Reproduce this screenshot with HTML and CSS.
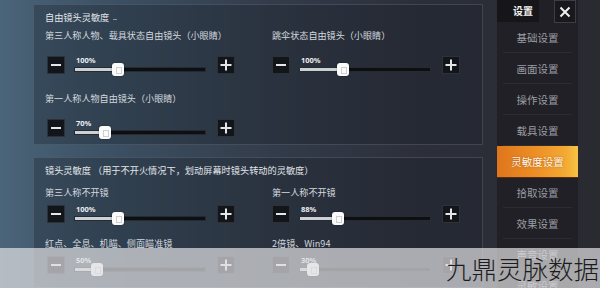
FILE: index.html
```html
<!DOCTYPE html>
<html lang="zh">
<head>
<meta charset="utf-8">
<title>灵敏度设置</title>
<link rel="stylesheet" href="styles.css">
</head>
<body>
<div class="screen">
  <div class="content">
    <section class="panel panel-free">
      <div class="panel-title">自由镜头灵敏度<span class="dash"></span></div>
      <div class="grid">
        <div class="setting">
          <div class="label">第三人称人物、载具状态自由镜头（小眼睛）</div>
          <div class="slider-row">
            <div class="btn"><svg width="12" height="12" viewBox="0 0 12 12"><path d="M1 6h10" stroke="#e4e6e8" stroke-width="2"/></svg></div>
            <div class="slider">
              <span class="pct">100%</span>
              <div class="track"><div class="fill" style="width:33.3%"></div><div class="thumb" style="left:33.3%"></div></div>
            </div>
            <div class="btn"><svg width="12" height="12" viewBox="0 0 12 12"><path d="M6 0.5v11M0.5 6h11" stroke="#e4e6e8" stroke-width="2"/></svg></div>
          </div>
        </div>
        <div class="setting">
          <div class="label">跳伞状态自由镜头（小眼睛）</div>
          <div class="slider-row">
            <div class="btn"><svg width="12" height="12" viewBox="0 0 12 12"><path d="M1 6h10" stroke="#e4e6e8" stroke-width="2"/></svg></div>
            <div class="slider">
              <span class="pct">100%</span>
              <div class="track"><div class="fill" style="width:33.3%"></div><div class="thumb" style="left:33.3%"></div></div>
            </div>
            <div class="btn"><svg width="12" height="12" viewBox="0 0 12 12"><path d="M6 0.5v11M0.5 6h11" stroke="#e4e6e8" stroke-width="2"/></svg></div>
          </div>
        </div>
        <div class="setting">
          <div class="label">第一人称人物自由镜头（小眼睛）</div>
          <div class="slider-row">
            <div class="btn"><svg width="12" height="12" viewBox="0 0 12 12"><path d="M1 6h10" stroke="#e4e6e8" stroke-width="2"/></svg></div>
            <div class="slider">
              <span class="pct">70%</span>
              <div class="track"><div class="fill" style="width:23.3%"></div><div class="thumb" style="left:23.3%"></div></div>
            </div>
            <div class="btn"><svg width="12" height="12" viewBox="0 0 12 12"><path d="M6 0.5v11M0.5 6h11" stroke="#e4e6e8" stroke-width="2"/></svg></div>
          </div>
        </div>
      </div>
    </section>

    <section class="panel panel-lens">
      <div class="panel-title">镜头灵敏度 （用于不开火情况下，划动屏幕时镜头转动的灵敏度）</div>
      <div class="grid">
        <div class="setting">
          <div class="label">第三人称不开镜</div>
          <div class="slider-row">
            <div class="btn"><svg width="12" height="12" viewBox="0 0 12 12"><path d="M1 6h10" stroke="#e4e6e8" stroke-width="2"/></svg></div>
            <div class="slider">
              <span class="pct">100%</span>
              <div class="track"><div class="fill" style="width:33.3%"></div><div class="thumb" style="left:33.3%"></div></div>
            </div>
            <div class="btn"><svg width="12" height="12" viewBox="0 0 12 12"><path d="M6 0.5v11M0.5 6h11" stroke="#e4e6e8" stroke-width="2"/></svg></div>
          </div>
        </div>
        <div class="setting">
          <div class="label">第一人称不开镜</div>
          <div class="slider-row">
            <div class="btn"><svg width="12" height="12" viewBox="0 0 12 12"><path d="M1 6h10" stroke="#e4e6e8" stroke-width="2"/></svg></div>
            <div class="slider">
              <span class="pct">88%</span>
              <div class="track"><div class="fill" style="width:29.3%"></div><div class="thumb" style="left:29.3%"></div></div>
            </div>
            <div class="btn"><svg width="12" height="12" viewBox="0 0 12 12"><path d="M6 0.5v11M0.5 6h11" stroke="#e4e6e8" stroke-width="2"/></svg></div>
          </div>
        </div>
        <div class="setting">
          <div class="label">红点、全息、机瞄、侧面瞄准镜</div>
          <div class="slider-row">
            <div class="btn"><svg width="12" height="12" viewBox="0 0 12 12"><path d="M1 6h10" stroke="#e4e6e8" stroke-width="2"/></svg></div>
            <div class="slider">
              <span class="pct">50%</span>
              <div class="track"><div class="fill" style="width:16.7%"></div><div class="thumb" style="left:16.7%"></div></div>
            </div>
            <div class="btn"><svg width="12" height="12" viewBox="0 0 12 12"><path d="M6 0.5v11M0.5 6h11" stroke="#e4e6e8" stroke-width="2"/></svg></div>
          </div>
        </div>
        <div class="setting">
          <div class="label">2倍镜、Win94</div>
          <div class="slider-row">
            <div class="btn"><svg width="12" height="12" viewBox="0 0 12 12"><path d="M1 6h10" stroke="#e4e6e8" stroke-width="2"/></svg></div>
            <div class="slider">
              <span class="pct">30%</span>
              <div class="track"><div class="fill" style="width:10%"></div><div class="thumb" style="left:10%"></div></div>
            </div>
            <div class="btn"><svg width="12" height="12" viewBox="0 0 12 12"><path d="M6 0.5v11M0.5 6h11" stroke="#e4e6e8" stroke-width="2"/></svg></div>
          </div>
        </div>
      </div>
    </section>
  </div>

  <nav class="sidebar">
    <div class="side-head">
      <div class="side-title">设置</div>
      <div class="close"><svg width="12" height="12" viewBox="0 0 12 12"><path d="M1.5 1.5l9 9M10.5 1.5l-9 9" stroke="#f0f0f0" stroke-width="2"/></svg></div>
    </div>
    <div class="item">基础设置</div>
    <div class="item">画面设置</div>
    <div class="item">操作设置</div>
    <div class="item">载具设置</div>
    <div class="item active">灵敏度设置</div>
    <div class="item">拾取设置</div>
    <div class="item">效果设置</div>
    <div class="item">声音设置</div>
    <div class="item">灵敏设置</div>
  </nav>
</div>
<div class="overlay"></div>
<div class="watermark">九鼎灵脉数据</div>
</body>
</html>
```

FILE: styles.css
```css
* { box-sizing: border-box; }

body {
  margin: 0;
  width: 600px;
  height: 288px;
  overflow: hidden;
  position: relative;
  font-family: "Noto Sans CJK SC", "Noto Sans", sans-serif;
  background: linear-gradient(90deg, #4a6479 0%, #3c5164 18%, #333c4a 45%, #2c2f3a 70%, #2a2a31 100%);
}

.screen {
  display: flex;
  height: 288px;
}

.content {
  width: 483px;
  padding: 4px 0 0 33px;
  display: flex;
  flex-direction: column;
  gap: 12px;
}

.panel {
  border: 1px solid rgba(120, 132, 150, 0.32);
  background: rgba(26, 30, 40, 0.32);
  padding: 6px 10px 7px 11px;
}

.panel-lens {
  flex: 1;
}

.panel-title {
  font-size: 9.2px;
  line-height: 12px;
  color: #e2e6ea;
  display: flex;
  align-items: center;
  white-space: nowrap;
}

.dash {
  display: inline-block;
  width: 4px;
  height: 1px;
  background: #8d96a2;
  margin-left: 4px;
  margin-top: 4px;
}

.grid {
  display: grid;
  grid-template-columns: 227px 1fr;
}

.panel-free .grid {
  margin-top: 6px;
  row-gap: 18px;
}

.panel-lens .grid {
  margin-top: 10px;
  row-gap: 14px;
}

.label {
  font-size: 9.1px;
  line-height: 12px;
  color: #d3d8de;
  white-space: nowrap;
}

.panel-free .label { margin-bottom: 15px; }
.panel-lens .label { margin-bottom: 7px; }

.slider-row {
  display: flex;
  align-items: flex-start;
  height: 18px;
}

.setting:nth-child(odd) .slider-row { margin-left: 2px; }

.btn {
  width: 18px;
  height: 18px;
  background: #12151a;
  border: 1px solid rgba(255, 255, 255, 0.12);
  display: flex;
  align-items: center;
  justify-content: center;
  flex: none;
}

.slider {
  width: 132px;
  margin: 0 11px 0 9px;
  display: flex;
  flex-direction: column;
}

.pct {
  font-family: "Noto Sans", sans-serif;
  font-size: 7.5px;
  font-weight: 700;
  line-height: 8px;
  color: #eceef0;
  margin-left: 2px;
}

.track {
  position: relative;
  height: 5px;
  margin-top: 3px;
  background: #0d0f13;
  border: 1px solid #262a31;
}

.fill {
  height: 100%;
  background: #cdd1d5;
}

.thumb {
  position: absolute;
  top: -5px;
  width: 12px;
  height: 13px;
  margin-left: -6px;
  background: #fbfbfb;
  border-radius: 3px;
  box-shadow: 0 0 2px rgba(0, 0, 0, 0.4);
}

.thumb::after {
  content: "";
  position: absolute;
  left: 4px;
  top: 4px;
  width: 4px;
  height: 5px;
  border: 1px solid #cfcfcf;
}

.sidebar {
  margin-left: 14px;
  width: 81px;
  background: #202026;
  display: flex;
  flex-direction: column;
}

.side-head {
  display: flex;
  justify-content: space-between;
  height: 22px;
  flex: none;
}

.side-title {
  width: 42px;
  height: 22px;
  background: #16161a;
  padding-left: 16px;
  font-size: 10px;
  line-height: 22px;
  font-weight: 700;
  color: #f2f2f2;
}

.close {
  width: 22px;
  height: 23px;
  margin-right: 2px;
  background: #19191d;
  border: 1px solid #3d3d45;
  display: flex;
  align-items: center;
  justify-content: center;
}

.item {
  position: relative;
  height: 31px;
  flex: none;
  text-align: center;
  font-size: 10.5px;
  line-height: 31px;
  color: #9c9da3;
}

.item::after {
  content: "";
  position: absolute;
  left: 6px;
  right: 6px;
  bottom: 0;
  height: 1px;
  background: rgba(255, 255, 255, 0.05);
}

.item.active {
  color: #fff8ee;
  background: linear-gradient(90deg, #de761c 0%, #ec8d25 45%, #f3aa33 85%, #f6c444 100%);
  box-shadow: 0 1px 0 #5a2c10;
  text-shadow: 0 0 2px rgba(120, 50, 0, 0.6);
}

.item.active::after { display: none; }

.overlay {
  position: absolute;
  left: 0;
  top: 248px;
  width: 600px;
  height: 40px;
  background: rgba(222, 222, 225, 0.72);
}

.watermark {
  position: absolute;
  left: 446px;
  top: 255px;
  font-size: 25.5px;
  line-height: 26px;
  white-space: nowrap;
  color: #1c1c1c;
  font-family: "Noto Sans CJK SC", sans-serif;
  font-weight: 300;
}
```
